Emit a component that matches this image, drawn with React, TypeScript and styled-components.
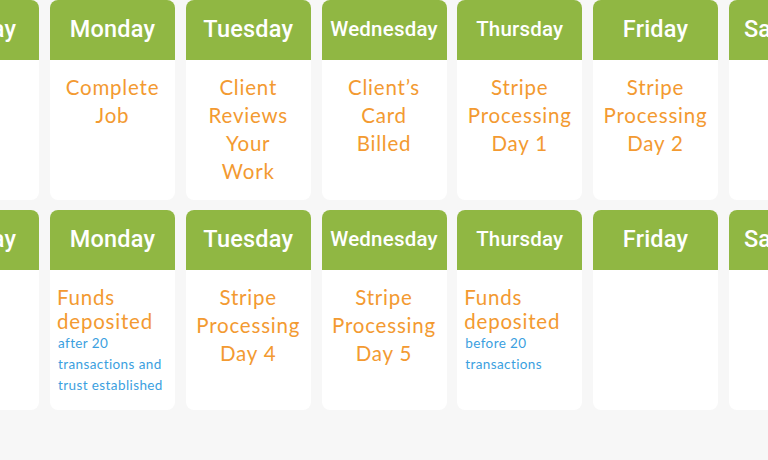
import React from "react";
import styled, { createGlobalStyle } from "styled-components";

const Global = createGlobalStyle`
  html, body { margin: 0; padding: 0; background: #f7f7f7; }
  body { font-family: Lato, "Open Sans", sans-serif; }
`;

const Page = styled.div`
  width: 768px;
  height: 460px;
  overflow: hidden;
  background: #f7f7f7;
  display: flex;
  flex-direction: column;
  gap: 10px;
`;

const Week = styled.div`
  display: flex;
  gap: 10.75px;
  margin-left: -85.75px;
`;

const Card = styled.div`
  flex: 0 0 125px;
  height: 200px;
  background: #ffffff;
  border-radius: 8px;
  overflow: hidden;
  display: flex;
  flex-direction: column;
`;

const Head = styled.div<{ $small?: boolean }>`
  height: 60px;
  flex: 0 0 60px;
  background: #90b743;
  color: #ffffff;
  font-family: Roboto, "Liberation Sans", sans-serif;
  font-weight: 500;
  font-size: ${(p) => (p.$small ? "20.5px" : "23.5px")};
  letter-spacing: 0.2px;
  display: flex;
  align-items: center;
  justify-content: center;
  white-space: nowrap;
  padding-bottom: 2px;
  box-sizing: border-box;
`;

const Body = styled.div<{ $left?: boolean }>`
  padding: ${(p) => (p.$left ? "15px 4px 0 7px" : "13px 2px 0")};
  text-align: ${(p) => (p.$left ? "left" : "center")};
`;

const Title = styled.div<{ $tight?: boolean }>`
  color: #f39a31;
  font-family: Lato, "Open Sans", sans-serif;
  font-size: 20.5px;
  letter-spacing: 0.8px;
  line-height: ${(p) => (p.$tight ? "24px" : "28px")};
  white-space: nowrap;
`;

const Note = styled.div`
  color: #3b9fe0;
  font-family: Lato, "Open Sans", sans-serif;
  font-size: 13.5px;
  letter-spacing: 0.4px;
  line-height: 21px;
  padding-left: 1px;
  white-space: nowrap;
`;

type Day = {
  name: string;
  small?: boolean;
  lines?: string[];
  left?: boolean;
  note?: string[];
};

const row1: Day[] = [
  { name: "Sunday" },
  { name: "Monday", lines: ["Complete", "Job"] },
  { name: "Tuesday", lines: ["Client", "Reviews", "Your", "Work"] },
  { name: "Wednesday", small: true, lines: ["Client’s", "Card", "Billed"] },
  { name: "Thursday", small: true, lines: ["Stripe", "Processing", "Day 1"] },
  { name: "Friday", lines: ["Stripe", "Processing", "Day 2"] },
  { name: "Saturday" },
];

const row2: Day[] = [
  { name: "Sunday" },
  {
    name: "Monday",
    left: true,
    lines: ["Funds", "deposited"],
    note: ["after 20", "transactions and", "trust established"],
  },
  { name: "Tuesday", lines: ["Stripe", "Processing", "Day 4"] },
  { name: "Wednesday", small: true, lines: ["Stripe", "Processing", "Day 5"] },
  {
    name: "Thursday",
    small: true,
    left: true,
    lines: ["Funds", "deposited"],
    note: ["before 20", "transactions"],
  },
  { name: "Friday" },
  { name: "Saturday" },
];

const DayCard = ({ d }: { d: Day }) => (
  <Card>
    <Head $small={d.small}>{d.name}</Head>
    {d.lines && (
      <Body $left={d.left}>
        {d.lines.map((l) => (
          <Title key={l} $tight={d.left}>
            {l}
          </Title>
        ))}
        {d.note && d.note.map((n) => <Note key={n}>{n}</Note>)}
      </Body>
    )}
  </Card>
);

export default function App() {
  return (
    <>
      <Global />
      <Page>
        <Week>
          {row1.map((d) => (
            <DayCard key={d.name} d={d} />
          ))}
        </Week>
        <Week>
          {row2.map((d) => (
            <DayCard key={d.name} d={d} />
          ))}
        </Week>
      </Page>
    </>
  );
}
